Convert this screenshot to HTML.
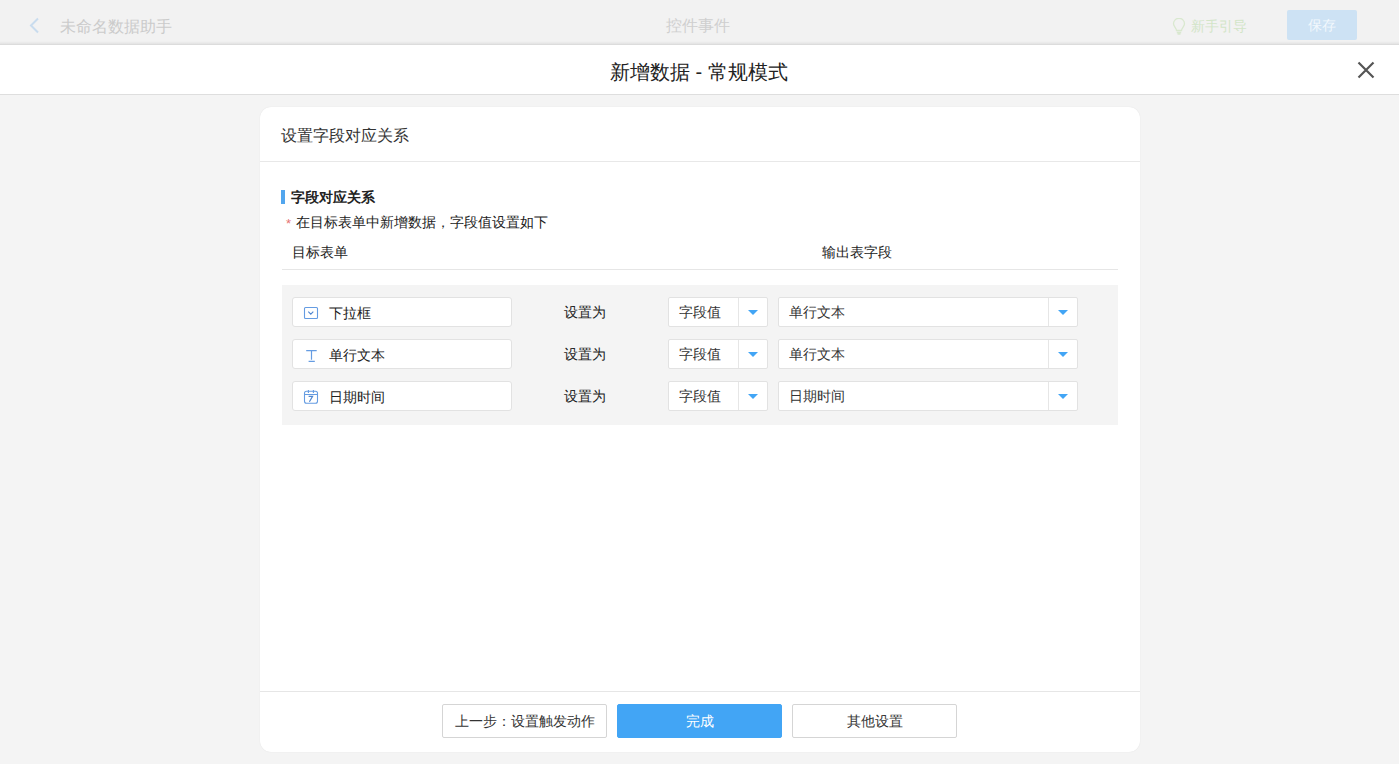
<!DOCTYPE html>
<html><head><meta charset="utf-8">
<style>
*{box-sizing:border-box;margin:0;padding:0}
html,body{width:1399px;height:764px;overflow:hidden;background:#f4f4f4;font-family:"Liberation Sans",sans-serif;color:#333}
.a{position:absolute}
.t{position:absolute;white-space:nowrap;line-height:1}
#top{position:absolute;left:0;top:0;width:1399px;height:45px;background:linear-gradient(to bottom,#f2f2f2 0,#f2f2f2 41px,#eeeeee 42px,#e8e8e8 43px,#e3e3e3 44px);border-bottom:1px solid #dcdcdc}
#mh{position:absolute;left:0;top:45px;width:1399px;height:50px;background:#fff;border-bottom:1px solid #dedede}
#card{position:absolute;left:260px;top:107px;width:880px;height:645px;background:#fff;border-radius:11px;box-shadow:0 0 1px rgba(0,0,0,.12)}
.inp{position:absolute;left:32px;width:220px;height:30px;background:#fff;border:1px solid #e2e2e2;border-radius:3px}
.sel{position:absolute;height:30px;background:#fff;border:1px solid #e2e2e2;border-radius:2px}
.sel .dv{position:absolute;top:0;bottom:0;width:1px;background:#e6e6e6}
.tri{position:absolute;width:0;height:0;border-left:5px solid transparent;border-right:5px solid transparent;border-top:5px solid #42a5f5}
.btn{position:absolute;top:597px;width:165px;height:34px;border:1px solid #d5d5d5;border-radius:2px;background:#fff}
</style></head><body>
<div id="top">
  <svg class="a" style="left:28px;top:17px" width="12" height="17" viewBox="0 0 12 17"><path d="M10 1.5 L3 8.5 L10 15.5" fill="none" stroke="#c9dcee" stroke-width="2"/></svg>
  <div class="t" style="left:60px;top:19px;font-size:16px;color:#cbcbcb">未命名数据助手</div>
  <div class="t" style="left:666px;top:18px;font-size:16px;color:#cfcfcf">控件事件</div>
  <svg class="a" style="left:1172px;top:18px" width="14" height="17" viewBox="0 0 14 17"><path d="M4.5 12.5 C4.5 10 1.5 8.5 1.5 5.8 A5.5 5.5 0 0 1 12.5 5.8 C12.5 8.5 9.5 10 9.5 12.5 Z M4.8 14.5 H9.2 M5.5 16 H8.5" fill="none" stroke="#d9e8cf" stroke-width="1.3"/></svg>
  <div class="t" style="left:1191px;top:19px;font-size:14px;color:#d3e5c8">新手引导</div>
  <div class="a" style="left:1287px;top:10px;width:70px;height:30px;background:#cde2f4;border-radius:2px"></div>
  <div class="t" style="left:1308px;top:18px;font-size:14px;color:#f2f8fd">保存</div>
</div>
<div id="mh">
  <div class="t" style="left:610px;top:17px;font-size:20px;color:#222">新增数据 - 常规模式</div>
  <svg class="a" style="left:1357px;top:16px" width="18" height="18" viewBox="0 0 18 18"><path d="M1.5 1.5 L16.5 16.5 M16.5 1.5 L1.5 16.5" stroke="#555" stroke-width="2.2"/></svg>
</div>
<div id="card">
  <div class="t" style="left:21px;top:21px;font-size:16px;color:#333">设置字段对应关系</div>
  <div class="a" style="left:0;top:54px;width:880px;height:1px;background:#e8e8e8"></div>

  <div class="a" style="left:21px;top:83px;width:4px;height:14px;background:#52a6ee"></div>
  <div class="t" style="left:31px;top:83px;font-size:14px;font-weight:bold;color:#222">字段对应关系</div>
  <div class="t" style="left:26px;top:110px;font-size:13px;color:#e57373">*</div>
  <div class="t" style="left:36px;top:108px;font-size:14px;color:#222">在目标表单中新增数据，字段值设置如下</div>
  <div class="t" style="left:32px;top:138px;font-size:14px;color:#222">目标表单</div>
  <div class="t" style="left:562px;top:138px;font-size:14px;color:#222">输出表字段</div>
  <div class="a" style="left:22px;top:162px;width:836px;height:1px;background:#e6e6e6"></div>

  <div class="a" style="left:22px;top:178px;width:836px;height:140px;background:#f4f4f4">
    <!-- row 1 -->
    <div class="inp" style="left:10px;top:12px">
      <div class="t" style="left:36px;top:8px;font-size:14px;color:#222">下拉框</div>
    </div>
    <div class="t" style="left:282px;top:20px;font-size:14px;color:#222">设置为</div>
    <div class="sel" style="left:386px;top:12px;width:100px"><div class="t" style="left:10px;top:7px;font-size:14px;color:#333">字段值</div><div class="dv" style="left:69px"></div><div class="tri" style="left:79px;top:12px"></div></div>
    <div class="sel" style="left:496px;top:12px;width:300px"><div class="t" style="left:10px;top:7px;font-size:14px;color:#333">单行文本</div><div class="dv" style="left:269px"></div><div class="tri" style="left:279px;top:12px"></div></div>
    <!-- row 2 -->
    <div class="inp" style="left:10px;top:54px">
      <div class="t" style="left:36px;top:8px;font-size:14px;color:#222">单行文本</div>
    </div>
    <div class="t" style="left:282px;top:62px;font-size:14px;color:#222">设置为</div>
    <div class="sel" style="left:386px;top:54px;width:100px"><div class="t" style="left:10px;top:7px;font-size:14px;color:#333">字段值</div><div class="dv" style="left:69px"></div><div class="tri" style="left:79px;top:12px"></div></div>
    <div class="sel" style="left:496px;top:54px;width:300px"><div class="t" style="left:10px;top:7px;font-size:14px;color:#333">单行文本</div><div class="dv" style="left:269px"></div><div class="tri" style="left:279px;top:12px"></div></div>
    <!-- row 3 -->
    <div class="inp" style="left:10px;top:96px">
      <div class="t" style="left:36px;top:8px;font-size:14px;color:#222">日期时间</div>
    </div>
    <div class="t" style="left:282px;top:104px;font-size:14px;color:#222">设置为</div>
    <div class="sel" style="left:386px;top:96px;width:100px"><div class="t" style="left:10px;top:7px;font-size:14px;color:#333">字段值</div><div class="dv" style="left:69px"></div><div class="tri" style="left:79px;top:12px"></div></div>
    <div class="sel" style="left:496px;top:96px;width:300px"><div class="t" style="left:10px;top:7px;font-size:14px;color:#333">日期时间</div><div class="dv" style="left:269px"></div><div class="tri" style="left:279px;top:12px"></div></div>
  </div>

  <div class="a" style="left:0;top:584px;width:880px;height:1px;background:#e6e6e6"></div>
  <div class="btn" style="left:182px"><div class="t" style="left:12px;top:9px;font-size:14px;color:#333">上一步：设置触发动作</div></div>
  <div class="btn" style="left:357px;border-color:#42a5f5;background:#42a5f5"><div class="t" style="left:68px;top:9px;font-size:14px;color:#fff">完成</div></div>
  <div class="btn" style="left:532px"><div class="t" style="left:54px;top:9px;font-size:14px;color:#333">其他设置</div></div>
</div>
<svg class="a" style="left:0;top:0" width="1399" height="764" viewBox="0 0 1399 764">
  <g fill="none" stroke="#659ce2" stroke-width="1.1">
    <rect x="304.5" y="307.5" width="13" height="11" rx="1"/>
    <path d="M308.3 311.6 L310.8 314.1 L313.3 311.6" stroke="#4f86d0"/>
    <path d="M306.2 350.6 H316.7 M311.5 350.6 V359.8 M308.6 361.4 H314.8" stroke-width="1.2"/>
    <rect x="304.5" y="391.3" width="13" height="12" rx="2"/>
    <path d="M304.5 394.5 H317.5 M308.4 390 V393 M313.4 390 V393"/>
    <path d="M308.6 396.3 H312.6 L309.4 401.8" stroke-width="1.2" stroke="#4f86d0"/>
  </g>
</svg>
</body></html>
